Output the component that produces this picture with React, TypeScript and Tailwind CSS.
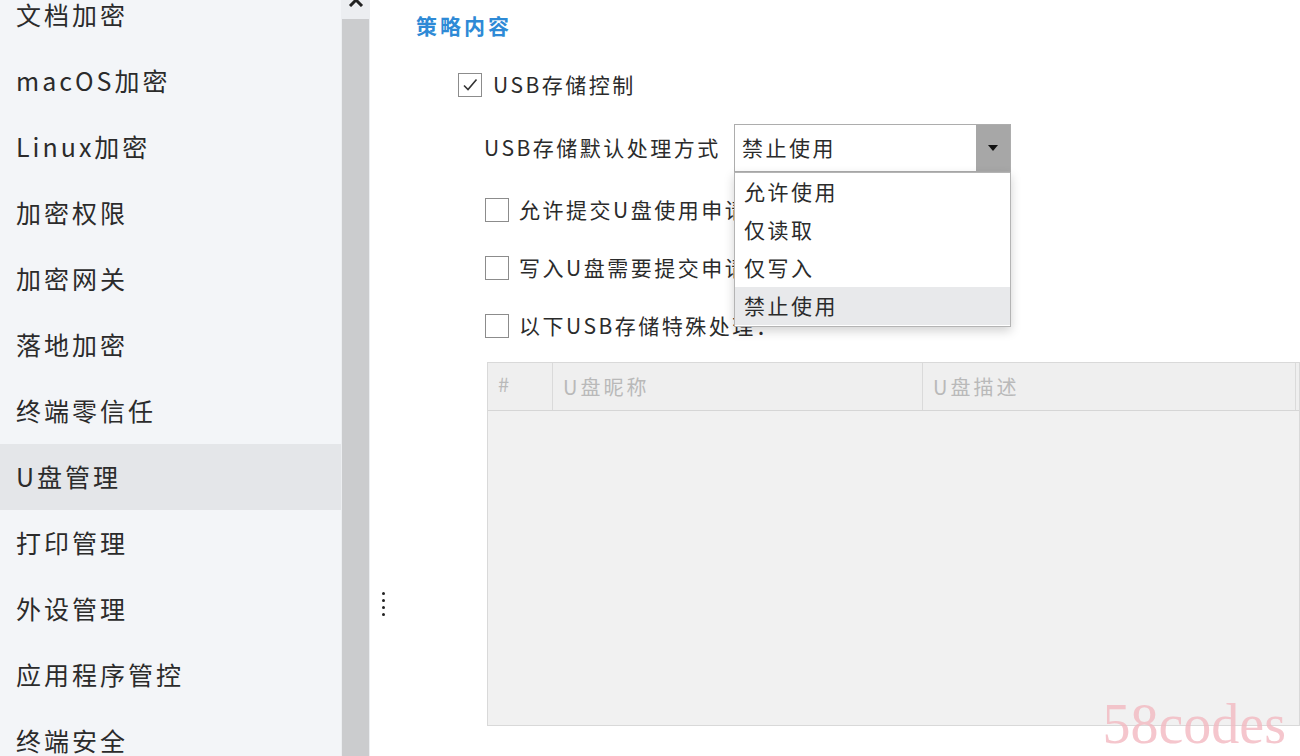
import React from "react";

const FONT = { fontFamily: '"Noto Sans CJK SC", "Noto Sans", sans-serif' };

const menu = [
  "文档加密",
  "macOS加密",
  "Linux加密",
  "加密权限",
  "加密网关",
  "落地加密",
  "终端零信任",
  "U盘管理",
  "打印管理",
  "外设管理",
  "应用程序管控",
  "终端安全",
];

function Checkbox({ checked }: { checked?: boolean }) {
  return (
    <span className="w-[24px] h-[24px] border border-[#8c8c8c] bg-white flex items-center justify-center shrink-0">
      {checked && (
        <svg width="18" height="18" viewBox="0 0 18 18" fill="none">
          <path d="M3 9.5 L7 13.5 L15.5 3.5" stroke="#333" strokeWidth="1.6" />
        </svg>
      )}
    </span>
  );
}

export default function App() {
  const options = ["允许使用", "仅读取", "仅写入", "禁止使用"];

  return (
    <div className="w-[1300px] h-[756px] flex overflow-hidden bg-white text-[#2b2b2b]" style={FONT}>
      {/* Sidebar */}
      <div className="w-[341px] bg-[#f3f5f8] shrink-0 overflow-hidden">
        <div className="-mt-[18px]">
          {menu.map((m) => (
            <div
              key={m}
              className={`h-[66px] flex items-center pl-[16px] text-[25px] tracking-[3px] ${
                m === "U盘管理" ? "bg-[#e4e6e9]" : ""
              }`}
            >
              {m}
            </div>
          ))}
        </div>
      </div>

      {/* Scrollbar */}
      <div className="w-[29px] bg-[#eceef1] flex flex-col shrink-0 px-[1px]">
        <div className="h-[19px] flex justify-center">
          <svg width="16" height="10" viewBox="0 0 16 10" className="-mt-[3px]">
            <path d="M2 9 L8 3 L14 9" stroke="#222" strokeWidth="3" fill="none" />
          </svg>
        </div>
        <div className="flex-1 bg-[#cbccce]" />
      </div>

      {/* Main */}
      <div className="flex-1 relative bg-white">
        <div className="absolute left-[12px] top-[592px] flex flex-col gap-[4px]">
          {[0, 1, 2, 3].map((i) => (
            <span key={i} className="w-[3px] h-[3px] rounded-full bg-[#222]" />
          ))}
        </div>

        <div className="pl-[46px] pt-[10px] text-[21px] leading-[30px] tracking-[3px] font-semibold text-[#2e8ad6]">
          策略内容
        </div>

        <div className="mt-[30px] ml-[88px] h-[30px] flex items-center gap-[11px] text-[21px] tracking-[2.5px]">
          <Checkbox checked />
          <span>USB存储控制</span>
        </div>

        <div className="mt-[24px] ml-[114px] h-[48px] flex items-center text-[21px] tracking-[2.5px]">
          <span className="w-[250px]">USB存储默认处理方式</span>
          <div className="relative w-[277px] h-[48px]">
            <div className="h-full border border-[#adadad] flex bg-white">
              <span className="flex-1 pl-[7px] flex items-center">禁止使用</span>
              <span className="w-[34px] bg-[#a7a7a7] flex items-center justify-center">
                <svg width="12" height="8" viewBox="0 0 12 8">
                  <path d="M1 1 H11 L6 7 Z" fill="#111" />
                </svg>
              </span>
            </div>
            <div className="absolute left-0 top-[48px] w-[277px] bg-white border border-[#b4b4b4] shadow-[0_4px_10px_rgba(0,0,0,0.18)] z-10 pb-[1px]">
              {options.map((o, i) => (
                <div
                  key={o}
                  className={`h-[38px] flex items-center pl-[9px] ${
                    i === 3 ? "bg-[#e8e9eb]" : ""
                  }`}
                >
                  {o}
                </div>
              ))}
            </div>
          </div>
        </div>

        <div className="mt-[23px] ml-[115px] flex flex-col gap-[28px] text-[21px] tracking-[2.5px]">
          {["允许提交U盘使用申请", "写入U盘需要提交申请", "以下USB存储特殊处理："].map((t) => (
            <div key={t} className="h-[30px] flex items-center gap-[10px]">
              <Checkbox />
              <span>{t}</span>
            </div>
          ))}
        </div>

        <div className="mt-[21px] ml-[117px] h-[364px] border border-[#d9d9d9] bg-[#f1f1f1] flex flex-col">
          <div className="h-[48px] flex border-b border-[#d6d6d6] bg-[#efefef] text-[20px] tracking-[3px] text-[#b9b9b9]">
            <div className="w-[65px] pl-[10px] pt-[6px] border-r border-[#dadada]">#</div>
            <div className="w-[370px] pl-[10px] flex items-center border-r border-[#dadada]">U盘昵称</div>
            <div className="w-[373px] pl-[10px] flex items-center border-r border-[#dadada]">U盘描述</div>
            <div className="flex-1" />
          </div>
          <div className="flex-1" />
        </div>

        <div
          className="absolute right-[14px] bottom-[4px] text-[56px] leading-none text-[#f3b9c1] opacity-80 pointer-events-none"
          style={{ fontFamily: '"Liberation Serif", serif' }}
        >
          58codes
        </div>
      </div>
    </div>
  );
}
